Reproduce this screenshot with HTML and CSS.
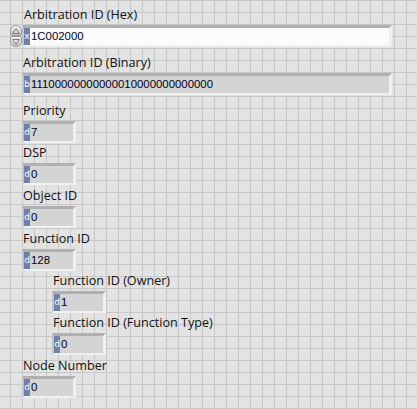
FILE: index.html
```html
<!DOCTYPE html>
<html>
<head>
<meta charset="utf-8">
<link rel="stylesheet" href="styles.css">
</head>
<body>
<div class="panel">
  <div class="grp g-hex">
    <div class="lbl">Arbitration ID (Hex)</div>
    <div class="row">
      <div class="spin">
        <div class="sb up"><svg width="8" height="6" viewBox="0 0 8 6"><path d="M4 0.5 L7.5 5.5 L0.5 5.5 Z" fill="none" stroke="#7a7a7a" stroke-width="1"/></svg></div>
        <div class="sb dn"><svg width="8" height="6" viewBox="0 0 8 6"><path d="M0.5 0.5 L7.5 0.5 L4 5.5 Z" fill="none" stroke="#7a7a7a" stroke-width="1"/></svg></div>
      </div>
      <div class="num wide white"><span class="rdx">x</span><span class="val">1C002000</span></div>
    </div>
  </div>
  <div class="grp g-bin">
    <div class="lbl">Arbitration ID (Binary)</div>
    <div class="num wide"><span class="rdx">b</span><span class="val">11100000000000010000000000000</span></div>
  </div>
  <div class="grp g-a">
    <div class="lbl">Priority</div>
    <div class="num"><span class="rdx">d</span><span class="val">7</span></div>
  </div>
  <div class="grp g-b">
    <div class="lbl">DSP</div>
    <div class="num"><span class="rdx">d</span><span class="val">0</span></div>
  </div>
  <div class="grp g-c">
    <div class="lbl">Object ID</div>
    <div class="num"><span class="rdx">d</span><span class="val">0</span></div>
  </div>
  <div class="grp g-c">
    <div class="lbl">Function ID</div>
    <div class="num"><span class="rdx">d</span><span class="val">128</span></div>
  </div>
  <div class="grp g-b sub">
    <div class="lbl">Function ID (Owner)</div>
    <div class="num"><span class="rdx">d</span><span class="val">1</span></div>
  </div>
  <div class="grp g-b sub">
    <div class="lbl">Function ID (Function Type)</div>
    <div class="num"><span class="rdx">d</span><span class="val">0</span></div>
  </div>
  <div class="grp g-c">
    <div class="lbl">Node Number</div>
    <div class="num"><span class="rdx">d</span><span class="val">0</span></div>
  </div>
</div>
</body>
</html>
```
FILE: styles.css
```css
html, body {
  margin: 0;
  padding: 0;
  width: 417px;
  height: 409px;
  overflow: hidden;
}
body {
  background-color: #e3e3e3;
  background-image:
    linear-gradient(to right, #c8c8c8 1px, transparent 1px),
    linear-gradient(to bottom, #c8c8c8 1px, transparent 1px);
  background-size: 12px 12px;
  background-position: 10px 0;
  font-family: "Open Sans", "DejaVu Sans", sans-serif;
  font-size: 12.6px;
  color: #111;
}
.panel {
  display: flex;
  flex-direction: column;
  padding-left: 22px;
}
.grp { display: flex; flex-direction: column; }
.g-hex { margin-top: 7px; margin-left: -12px; }
.g-hex .lbl { margin-left: 13px; }
.g-bin { margin-top: 8px; }
.g-a { margin-top: 8px; }
.g-b { margin-top: 2px; }
.g-c { margin-top: 3px; }
.sub { margin-left: 30px; }
.lbl {
  height: 16px;
  line-height: 16px;
  margin-bottom: 2px;
  padding-left: 1px;
  white-space: nowrap;
}
.row { display: flex; }
.spin {
  width: 12px;
  height: 22px;
  display: flex;
  flex-direction: column;
}
.sb {
  flex: 1;
  display: flex;
  align-items: center;
  justify-content: center;
  background: linear-gradient(#f4f4f4, #c6c6c6);
  border: 1px solid #9a9a9a;
  border-radius: 6px;
}
.sb.up { border-bottom-left-radius: 2px; border-bottom-right-radius: 2px; }
.sb.dn { border-top-left-radius: 2px; border-top-right-radius: 2px; }
.num {
  box-sizing: border-box;
  width: 54px;
  height: 22px;
  display: flex;
  align-items: stretch;
  background: #d4d4d4;
  border-top: 3px solid #b0b0b0;
  border-left: 2px solid #c4c4c4;
  border-right: 3px solid #f0f0f0;
  border-bottom: 2px solid #f0f0f0;
}
.num.wide { width: 370px; }
.num.white { background: #fbfbfb; }
.rdx {
  width: 6px;
  background: #6f81a9;
  color: #ffffff;
  font-family: "DejaVu Sans", sans-serif;
  font-size: 9px;
  line-height: 17px;
  text-align: center;
  overflow: hidden;
}
.val {
  padding-left: 1px;
  line-height: 17px;
  font-family: "Liberation Sans", sans-serif;
  font-size: 11.4px;
  color: #00001a;
  white-space: nowrap;
}
```
